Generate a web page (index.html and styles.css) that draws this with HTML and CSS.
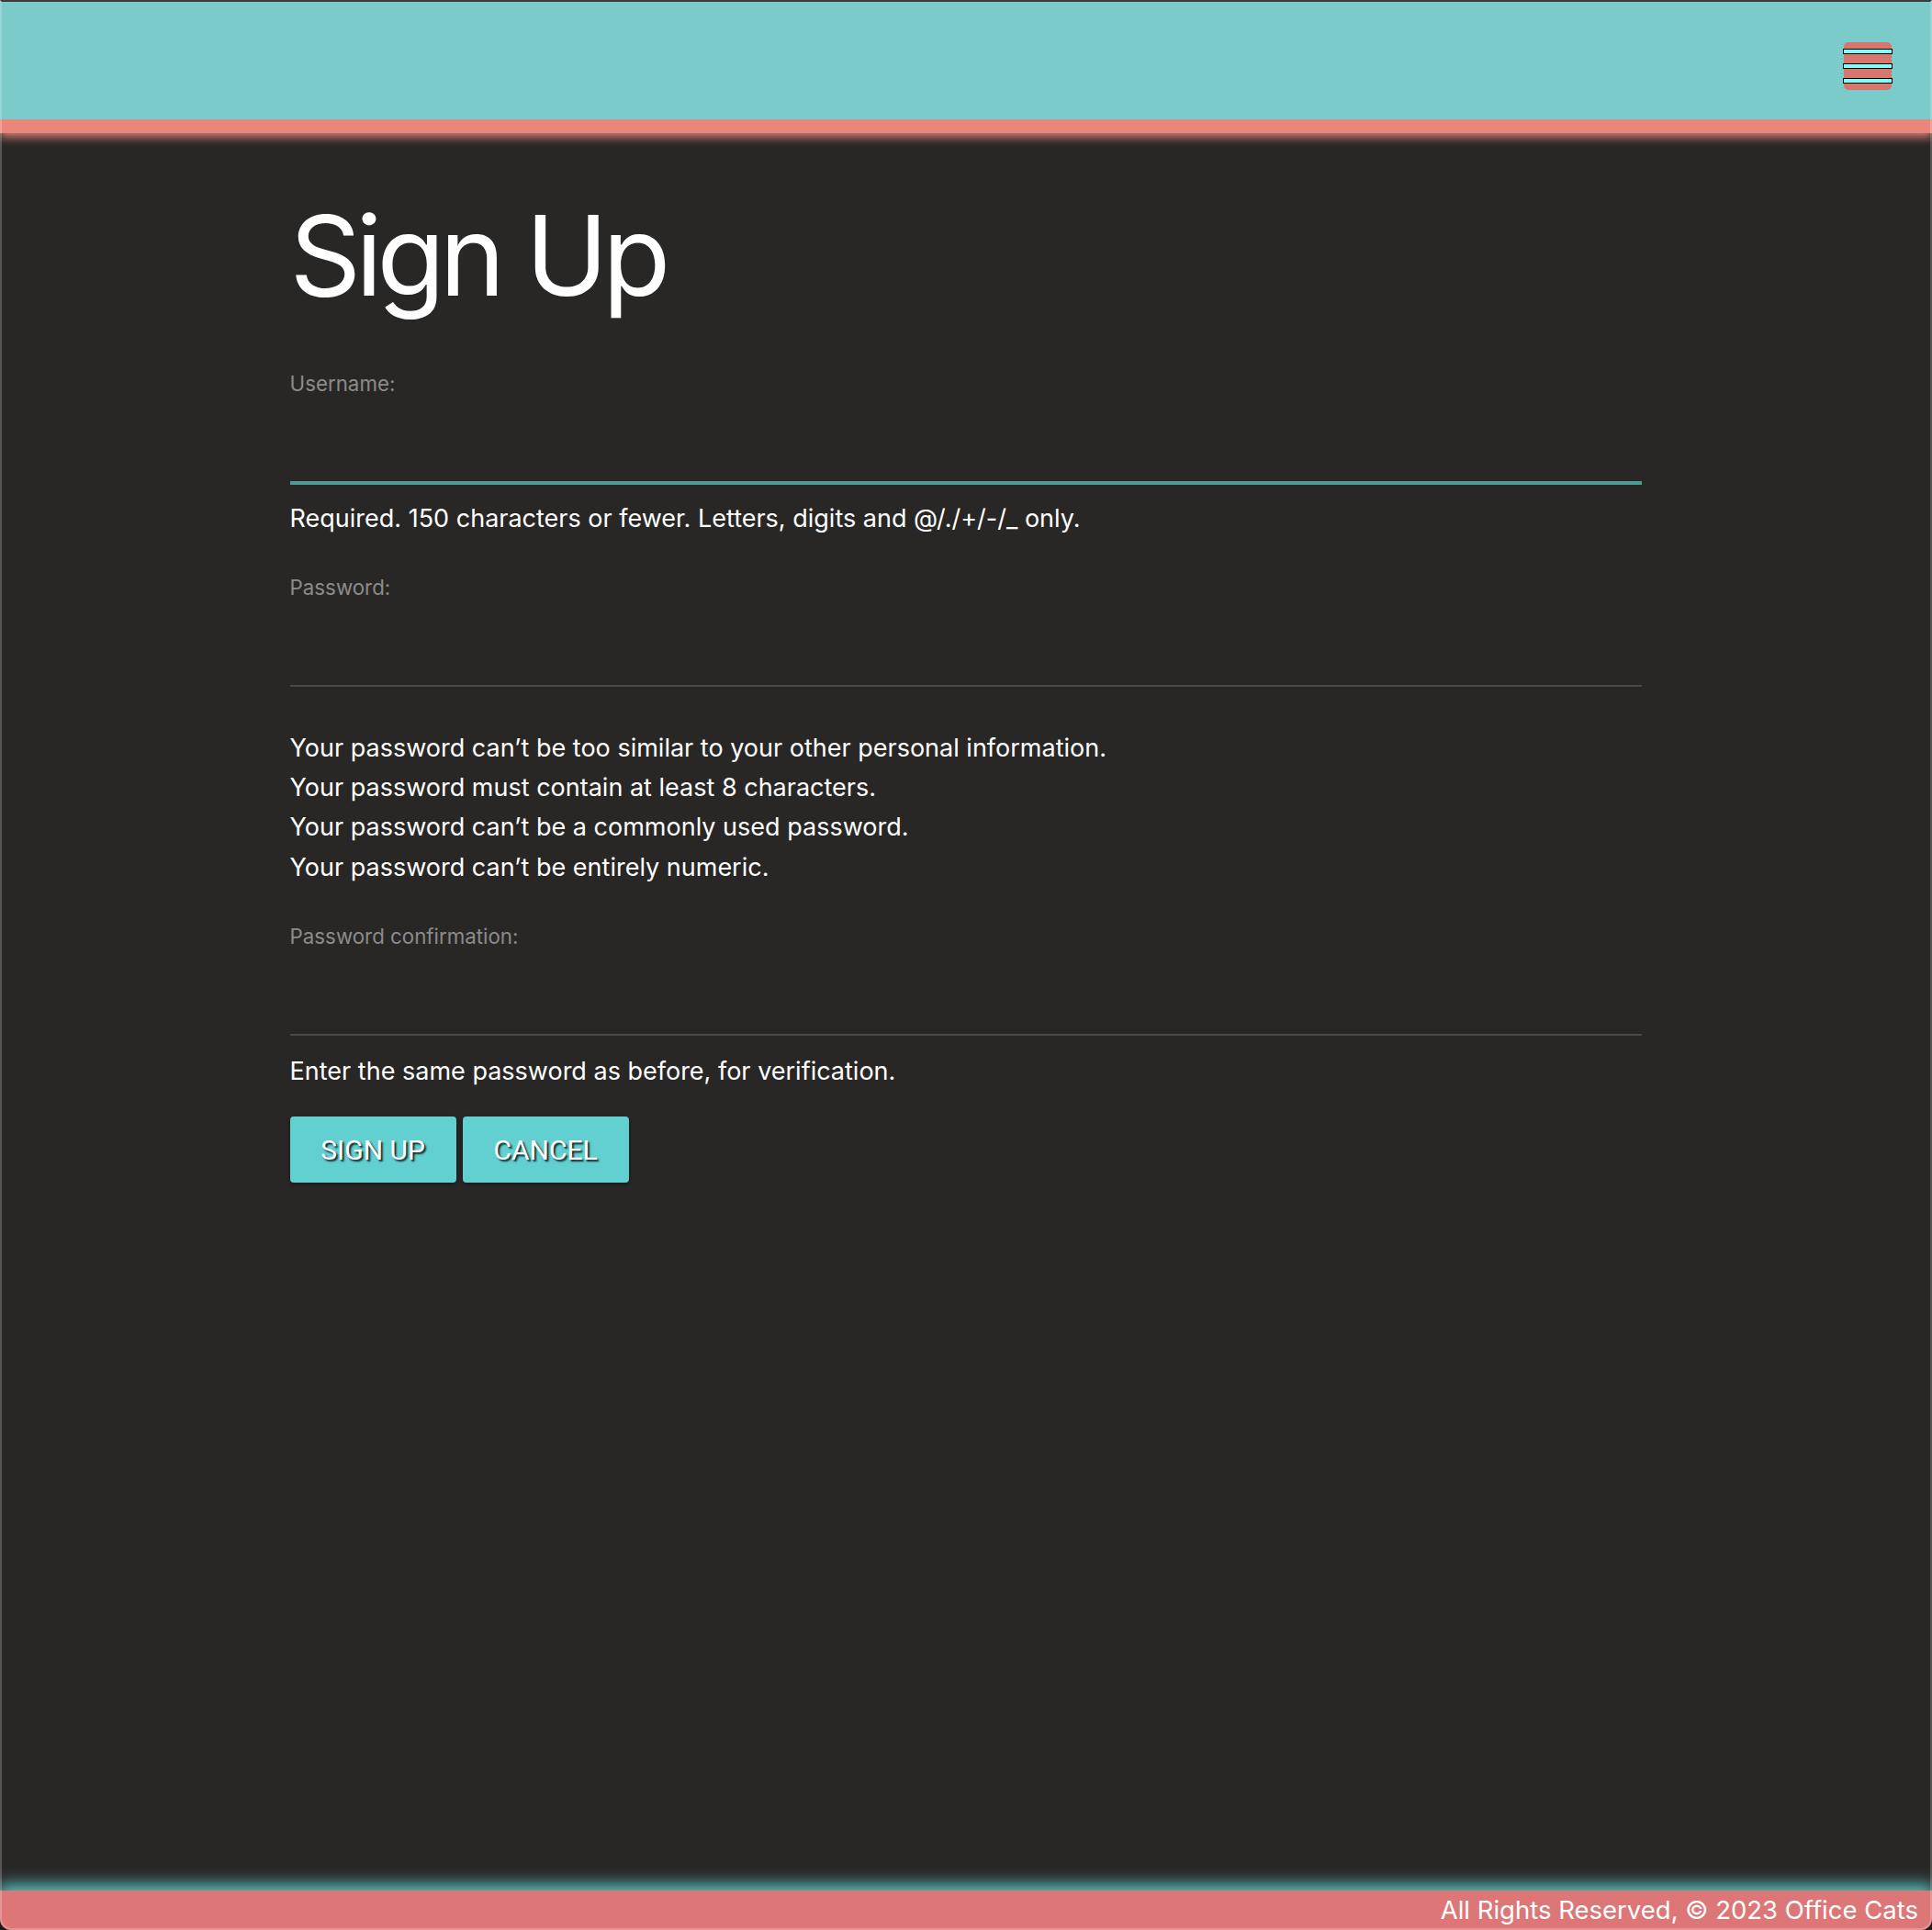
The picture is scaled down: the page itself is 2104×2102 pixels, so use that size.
FILE: index.html
```html
<!DOCTYPE html>
<html lang="en">
<head>
<meta charset="utf-8">
<title>Sign Up</title>
<link rel="stylesheet" href="styles.css">
</head>
<body>
<div class="frame"></div>
<div class="page">
  <header class="topbar">
    <button class="menu" aria-label="Menu">
      <span class="bar"></span>
      <span class="bar"></span>
      <span class="bar"></span>
    </button>
  </header>
  <main class="content">
    <h1 class="title">Sign Up</h1>
    <form class="form">
      <div class="field">
        <label class="label" for="username">Username:</label>
        <input class="input input-focus" id="username" type="text">
        <p class="help">Required. 150 characters or fewer. Letters, digits and @/./+/-/_ only.</p>
      </div>
      <div class="field">
        <label class="label" for="password1">Password:</label>
        <input class="input" id="password1" type="password">
        <ul class="help-list">
          <li>Your password can’t be too similar to your other personal information.</li>
          <li>Your password must contain at least 8 characters.</li>
          <li>Your password can’t be a commonly used password.</li>
          <li>Your password can’t be entirely numeric.</li>
        </ul>
      </div>
      <div class="field">
        <label class="label" for="password2">Password confirmation:</label>
        <input class="input" id="password2" type="password">
        <p class="help help-last">Enter the same password as before, for verification.</p>
      </div>
      <div class="actions">
        <button class="btn" type="submit">Sign Up</button>
        <button class="btn" type="button">Cancel</button>
      </div>
    </form>
  </main>
  <footer class="footer">All Rights Reserved, © 2023 Office Cats</footer>
</div>
</body>
</html>
```

FILE: styles.css
```css
* { box-sizing: border-box; }

html, body {
  margin: 0;
  padding: 0;
  background: #282726;
}

body {
  font-family: Inter, "Noto Sans", "Liberation Sans", sans-serif;
  color: #ffffff;
  overflow: hidden;
}

.frame {
  position: fixed;
  inset: 0;
  pointer-events: none;
  z-index: 10;
  border: 2px solid rgba(255, 255, 255, 0.22);
  border-top: 2px solid #3c3c3c;
  border-radius: 0 0 12px 12px;
  box-shadow: 0 0 0 40px #1c1c1c;
}

.page {
  min-height: 100vh;
  display: flex;
  flex-direction: column;
}

.topbar {
  height: 145px;
  background: #7ccbcb;
  border-bottom: 15px solid #e8877a;
  box-shadow: 0 5px 9px rgba(232, 135, 122, 0.85);
  display: flex;
  justify-content: flex-end;
  align-items: flex-start;
  padding: 46px 44px 0 0;
  position: relative;
  z-index: 2;
}

.menu {
  width: 52px;
  height: 52px;
  background: #d7766c;
  border: none;
  border-radius: 5px;
  padding: 7px 0 0 0;
  display: flex;
  flex-direction: column;
  align-items: center;
  gap: 10px;
}

.bar {
  display: block;
  width: 54px;
  height: 6px;
  flex: none;
  background: #80ffff;
  border: 1px solid #000000;
}

.content {
  flex: 1;
  width: 70%;
  margin: 0 auto;
}

.title {
  font-size: 121px;
  line-height: 145px;
  font-weight: 400;
  margin: 61px 0 50px 0;
  letter-spacing: -6px;
}

.form {
  display: flex;
  flex-direction: column;
}

.field {
  display: flex;
  flex-direction: column;
  margin-bottom: 37px;
}

.label {
  font-size: 22.3px;
  line-height: 33px;
  color: #8c8b8a;
}

.input {
  width: 100%;
  height: 92px;
  background: transparent;
  border: none;
  border-bottom: 2px solid #4a4948;
  outline: none;
  padding: 0;
  color: #fff;
  font: inherit;
}

.input-focus {
  height: 94px;
  border-bottom: 4px solid #4c9d95;
}

.help {
  margin: 15px 0 0 0;
  font-size: 27px;
  line-height: 43.33px;
  color: #ffffff;
}

.help-last {
  margin-top: 17px;
}

.help-list {
  list-style: none;
  margin: 44.5px 0 0 0;
  padding: 0;
  font-size: 27px;
  line-height: 43.33px;
}

.actions {
  display: flex;
  gap: 7px;
  margin-top: -9px;
}

.btn {
  min-width: 181px;
  height: 72px;
  padding: 0 32px;
  background: #62cfd0;
  color: #ffffff;
  border: none;
  border-radius: 4px;
  font-family: Roboto, "Liberation Sans", sans-serif;
  font-size: 30px;
  text-transform: uppercase;
  text-shadow: 2px 2px 2px rgba(0, 0, 0, 0.85);
  box-shadow: 0 2px 4px rgba(0, 0, 0, 0.35);
}

.footer {
  height: 43px;
  background: #dd7676;
  box-shadow: 0 -4px 18px 2px rgba(98, 214, 214, 0.95);
  text-align: right;
  font-size: 27.5px;
  line-height: 43px;
  padding-right: 15px;
  position: relative;
  z-index: 2;
}
```
